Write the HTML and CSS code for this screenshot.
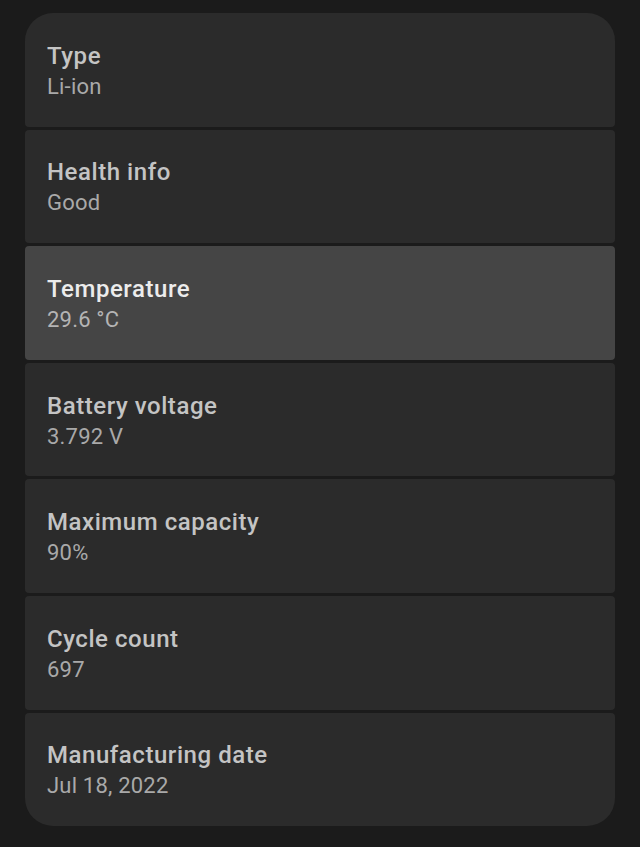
FILE: index.html
```html
<!DOCTYPE html>
<html>
<head>
<meta charset="utf-8">
<link rel="stylesheet" href="styles.css">
</head>
<body>
<div class="list">
  <div class="item"><div class="title">Type</div><div class="sub">Li-ion</div></div>
  <div class="item"><div class="title">Health info</div><div class="sub">Good</div></div>
  <div class="item active"><div class="title">Temperature</div><div class="sub">29.6 °C</div></div>
  <div class="item"><div class="title">Battery voltage</div><div class="sub">3.792 V</div></div>
  <div class="item"><div class="title">Maximum capacity</div><div class="sub">90%</div></div>
  <div class="item"><div class="title">Cycle count</div><div class="sub">697</div></div>
  <div class="item"><div class="title">Manufacturing date</div><div class="sub">Jul 18, 2022</div></div>
</div>
</body>
</html>
```
FILE: styles.css
```css
html, body {
  margin: 0;
  padding: 0;
  background: #1b1b1b;
  font-family: Roboto, "Noto Sans", sans-serif;
}
body {
  padding: 13px 25px 0 25px;
  width: 590px;
  height: 834px;
}
.list {
  display: flex;
  flex-direction: column;
  gap: 3px;
  border-radius: 28px;
  overflow: hidden;
}
.item {
  height: 113.6px;
  box-sizing: border-box;
  background: #2b2b2b;
  border-radius: 4px;
  padding: 3px 22px 0;
  display: flex;
  flex-direction: column;
  justify-content: center;
}
.item.active {
  background: #454545;
}
.title {
  font-size: 24px;
  font-weight: 500;
  color: #c4c4c4;
  line-height: 31px;
  letter-spacing: 0.55px;
}
.sub {
  font-size: 22px;
  color: #a9a9a9;
  line-height: 30px;
  letter-spacing: 0.2px;
}
.active .title { color: #ececec; }
.active .sub { color: #b4b4b4; }
```
